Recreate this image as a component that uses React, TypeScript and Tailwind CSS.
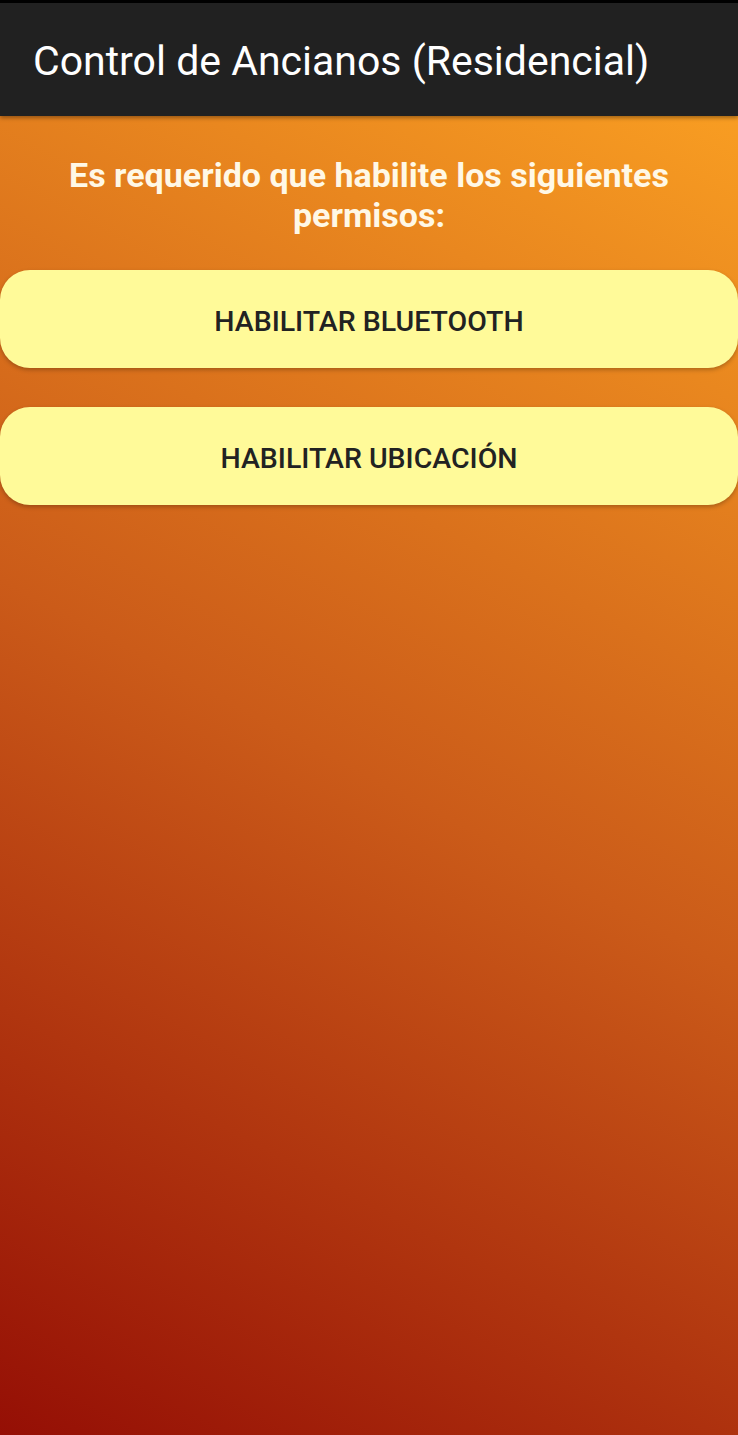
export default function App() {
  const buttons = ["HABILITAR BLUETOOTH", "HABILITAR UBICACIÓN"];

  return (
    <div className="flex h-[1435px] w-[738px] flex-col overflow-hidden font-['Roboto',sans-serif]">
      {/* Toolbar */}
      <header className="z-10 flex h-[116px] shrink-0 items-center border-t-[3px] border-black bg-[#212121] pl-[33px] shadow-[0_2px_4px_rgba(0,0,0,0.35)]">
        <h1 className="mt-[4px] text-[41px] leading-none text-white">
          Control de Ancianos (Residencial)
        </h1>
      </header>

      <main className="flex flex-1 flex-col bg-[linear-gradient(208deg,#f89d22_0%,#cb5b19_50%,#950f05_100%)]">
        <p className="mx-auto mt-[39px] w-[660px] text-center text-[34px] leading-[40px] font-bold text-[#fff8e6]">
          Es requerido que habilite los siguientes permisos:
        </p>

        {/* Permission buttons */}
        <div className="mt-[35px] flex flex-col gap-[39px]">
          {buttons.map((label) => (
            <button
              key={label}
              className="h-[98px] w-full rounded-[30px] bg-[#fffa99] pt-[6px] text-[28.5px] font-medium text-[#222] shadow-[0_2px_4px_rgba(0,0,0,0.25)]"
            >
              {label}
            </button>
          ))}
        </div>
      </main>
    </div>
  );
}
